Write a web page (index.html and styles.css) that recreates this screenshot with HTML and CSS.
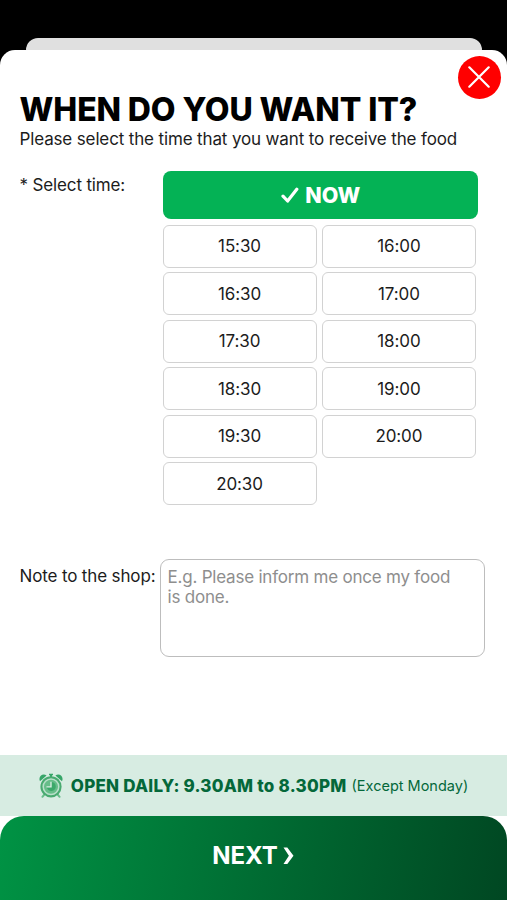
FILE: index.html
```html
<!DOCTYPE html>
<html lang="en">
	<head>
		<meta charset="utf-8">
		<title>When do you want it?</title>
		<link rel="stylesheet" href="styles.css">
	</head>
	<body>
		<div class="behind"></div>
		<div id="sheet">
			<button class="close" aria-label="Close">
				<svg width="22" height="22" viewBox="0 0 22 22"><path d="M1.3 1.3L20.7 20.7M20.7 1.3L1.3 20.7" fill="none" stroke="#fff" stroke-width="2.2" stroke-linecap="round"/></svg>
			</button>
			<div class="content">
				<h1>WHEN DO YOU WANT IT?</h1>
				<p class="sub">Please select the time that you want to receive the food</p>
				<div class="row time">
					<div class="label select">* Select time:</div>
					<div class="times">
						<button class="now">
							<svg width="18" height="17" viewBox="0 0 18 17"><path d="M2 9.2L6.6 14L15.8 2.3" fill="none" stroke="#fff" stroke-width="3.2" stroke-linecap="round" stroke-linejoin="round"/></svg>
							<span>NOW</span>
						</button>
						<div class="slots">
							<button class="slot">15:30</button>
							<button class="slot">16:00</button>
							<button class="slot">16:30</button>
							<button class="slot">17:00</button>
							<button class="slot">17:30</button>
							<button class="slot">18:00</button>
							<button class="slot">18:30</button>
							<button class="slot">19:00</button>
							<button class="slot">19:30</button>
							<button class="slot">20:00</button>
							<button class="slot">20:30</button>
						</div>
					</div>
				</div>
				<div class="row note">
					<label class="label" for="note">Note to the shop:</label>
					<textarea id="note" placeholder="E.g. Please inform me once my food is done."></textarea>
				</div>
			</div>
			<div class="open">
				<svg class="clock" width="26" height="26" viewBox="0 0 26 26">
					<path d="M2 8.2C-.2 3.8 4.4-.3 8.6 2.4zM24 8.2C26.2 3.8 21.6-.3 17.4 2.4z" fill="#36a568"/>
					<path d="M11 .8h4v1.5h-1v2h-2v-2h-1z" fill="#36a568"/>
					<path d="M6 22L4.4 23.8M20 22l1.6 1.8" stroke="#66bd89" stroke-width="2" stroke-linecap="round"/>
					<circle cx="13" cy="13.8" r="10.6" fill="#48aa70"/>
					<circle cx="13" cy="13.8" r="7.8" fill="#66bd89" stroke="#b9dfca" stroke-width="1.5"/>
					<path d="M13 9v5H8.8A4.5 4.5 0 1 0 13 9z" fill="#3ca86a"/>
					<path d="M13 8.8v5.1H8.5" fill="none" stroke="#d7ece2" stroke-width="1.4"/>
				</svg>
				<strong>OPEN DAILY: 9.30AM to 8.30PM</strong>
				<span class="except">(Except Monday)</span>
			</div>
			<button class="next">
				<span>NEXT</span>
				<svg width="12" height="18" viewBox="0 0 12 18"><path d="M.5.5h3.8l6.2 8.3-6.2 8.3H.5l5.4-8.3z" fill="#fff"/></svg>
			</button>
		</div>
	</body>
</html>
```
FILE: styles.css
```css
* {box-sizing:border-box;}
body, html {margin:0;padding:0;height:900px;overflow:hidden;background:#000;}
body {padding-top:38px;font-family:Inter,"Liberation Sans",sans-serif;font-size:17px;color:#1c1c1c;}
button, textarea {margin:0;font-family:inherit;color:inherit;}
.behind {height:12px;margin:0 25px 0 25.5px;border-radius:12px 12px 0 0;background:#e0e0e0;}

#sheet {position:relative;display:flex;flex-direction:column;height:850px;border-radius:15px 15px 0 0;background:#fff;}
.close {position:absolute;top:5.5px;right:6px;display:flex;align-items:center;justify-content:center;width:43px;height:43px;padding:0 1px 0 0;border:0;border-radius:50%;background:#f00;}
.content {flex:1;padding:40px 22px 0 19.5px;}
h1 {margin:0;font-size:32px;line-height:39px;font-weight:800;letter-spacing:-0.1px;white-space:nowrap;color:#000;}
.sub {margin:0;line-height:20px;letter-spacing:-0.14px;white-space:nowrap;}

.row {display:flex;}
.label {flex:none;line-height:20px;letter-spacing:-0.14px;white-space:nowrap;}
.time {margin-top:22px;}
.select {width:143px;padding-top:4px;}
.times {width:315.5px;}
.now {display:flex;align-items:center;justify-content:center;gap:6px;width:100%;height:48px;padding:0 0 0 1px;border:0;border-radius:8px;background:#04b255;color:#fff;font-size:21.5px;font-weight:800;}
.slots {display:grid;grid-template-columns:154px 154px;grid-auto-rows:43px;gap:4.6px 5.4px;margin-top:5.5px;}
.slot {padding:0;border:1px solid #d2d2d2;border-radius:6px;background:#fff;font-size:17px;letter-spacing:-0.1px;}

.note {margin-top:54px;}
.note .label {width:140.5px;padding-top:7px;}
textarea {width:324.5px;height:98px;padding:7px 20px 7px 6.5px;border:1px solid #bdbdbd;border-radius:9px;resize:none;background:#fff;font-size:17px;line-height:20px;letter-spacing:-0.21px;}
textarea::placeholder {color:#8e8e8e;opacity:1;}

.open {display:flex;align-items:center;justify-content:center;height:61px;padding-right:1px;background:#d7ece2;color:#04683a;white-space:nowrap;}
.clock {margin-right:7px;}
.open strong {font-size:17px;font-weight:800;letter-spacing:0.23px;}
.except {margin-left:5px;font-size:14.5px;}
.next {display:flex;align-items:center;justify-content:center;gap:5px;height:84px;padding:0 0 5px;border:0;border-radius:24px 24px 0 0;background:linear-gradient(100deg,#009344,#004722);color:#fff;font-size:24px;font-weight:700;}
```
